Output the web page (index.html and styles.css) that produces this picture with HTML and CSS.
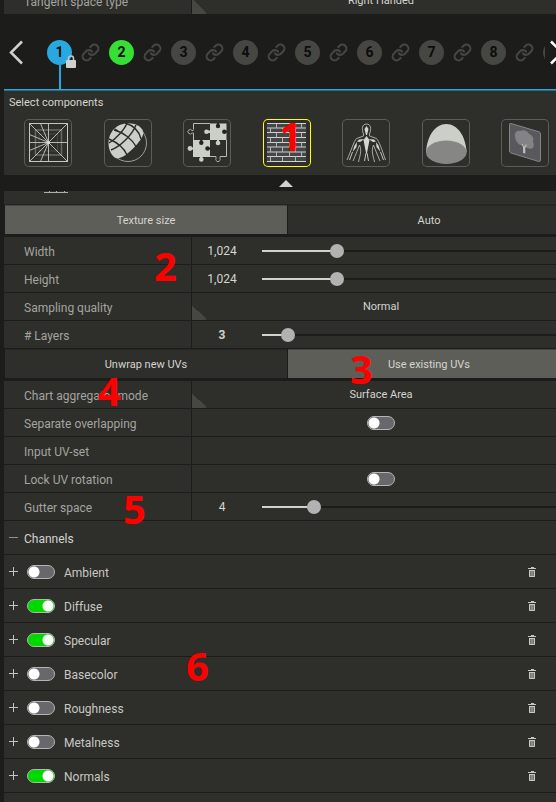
FILE: index.html
```html
<!DOCTYPE html>
<html lang="en">
<head>
<meta charset="utf-8">
<title>Components</title>
<link rel="stylesheet" href="styles.css">
</head>
<body>
<svg class="defs" aria-hidden="true">
  <symbol id="link" viewBox="0 0 24 24"><path d="M10 13a5 5 0 0 0 7.54.54l3-3a5 5 0 0 0-7.07-7.07l-1.72 1.71M14 11a5 5 0 0 0-7.54-.54l-3 3a5 5 0 0 0 7.07 7.07l1.71-1.71" fill="none" stroke="currentColor" stroke-width="2.6" stroke-linecap="round"/></symbol>
  <symbol id="plus" viewBox="0 0 9 9"><path d="M0 4.5H9M4.5 0V9" stroke="currentColor"/></symbol>
  <symbol id="trash" viewBox="0 0 8 10"><path d="M3 0h3v1h2v1H0V1h3z" fill="#c8c8c4"/><path d="M1 3h6v7H1z" fill="#75756f"/><path d="M1.5 3v6.500h5V3M1 3.500h6" fill="none" stroke="#c8c8c4"/><path d="M4 4v5" stroke="#a0a09a"/></symbol>
</svg>
<main class="app">
  <div class="clip-top">
    <div class="row wide">
      <label for="tangent">Tangent space type</label>
      <div class="cell drop"><select id="tangent"><option>Right Handed</option></select></div>
    </div>
  </div>

  <nav class="steps">
    <button class="chev" aria-label="Previous"><svg width="16" height="25" viewBox="0 0 16 25"><path d="M14 1.500L3 12.500L14 23.500" fill="none" stroke="currentColor" stroke-width="2.500"/></svg></button>
    <div class="track">
      <button class="step blue">1<svg class="lock" width="10" height="13" viewBox="0 0 10 13"><path d="M2.500 6V3.500a2.500 2.500 0 0 1 5 0V6" fill="none" stroke="#c8c8c4" stroke-width="1.500"/><rect y="5" width="10" height="8" rx="1" fill="#d0d0cc"/></svg></button>
      <svg class="link"><use href="#link"/></svg>
      <button class="step green">2</button><svg class="link"><use href="#link"/></svg>
      <button class="step">3</button><svg class="link"><use href="#link"/></svg>
      <button class="step">4</button><svg class="link"><use href="#link"/></svg>
      <button class="step">5</button><svg class="link"><use href="#link"/></svg>
      <button class="step">6</button><svg class="link"><use href="#link"/></svg>
      <button class="step">7</button><svg class="link"><use href="#link"/></svg>
      <button class="step">8</button><svg class="link"><use href="#link"/></svg>
      <button class="step" aria-label="Step nine"></button>
    </div>
    <button class="chev next" aria-label="Next"><svg width="16" height="25" viewBox="0 0 16 25"><path d="M1 1.500L12 12.500L1 23.500" fill="none" stroke="currentColor" stroke-width="2.500"/></svg></button>
  </nav>

  <section class="components">
    <h2>Select components</h2>
    <div class="cards">
      <button class="card" aria-label="Remesh"><svg viewBox="0 0 48 48" fill="none" stroke="#c4c6c0"><rect x="11.500" y="11" width="26" height="25" stroke="#686864" stroke-width="1.500"/><rect x="15" y="15" width="18.500" height="17" stroke="#484844"/><rect x="5.500" y="4.500" width="38" height="38"/><path d="M24.500 4.500v38M5.500 23.500h38" stroke-width=".9"/><path d="M5.500 4.500l38 38M43.500 4.500l-38 38M16.500 4.500l8 19-8 19M5.500 15.500l19 8-19 8" stroke-width=".9"/><circle cx="24.500" cy="23.500" r="1.500" fill="#ddd" stroke="none"/></svg></button>
      <button class="card" aria-label="Retopology"><svg viewBox="0 0 48 48"><circle cx="24" cy="24" r="18.500" fill="none" stroke="#b8bab4" stroke-width=".8"/><path d="M39 12C37 7 31 4.300 24 4.300C13 4.300 4.500 13 4.500 24C4.500 31 7.500 37 12 39.200C17 40.500 25 34 31 27.500C36 22 40.500 16 39 12Z" fill="#cccec8"/><path d="M10 11C19 13 28 20 32 27.500M5 20C12 23 20 29 23 36M21 4C28 6 35 11 37 20M23 4C21 10 12 20 5 24M32 6C28 16 17 27 7 31M11 10L17 14" fill="none" stroke="#2b2b28" stroke-width="1.400"/></svg></button>
      <button class="card" aria-label="UV unwrap"><svg viewBox="0 0 48 48"><path d="M27 4.500H43.500V21H27ZM10 21H27V38H10Z" fill="#cccec8"/><path d="M27 4.500H10.500V10.500M10.500 15V21M43.500 21V37.500H37M33 37.500H27" fill="none" stroke="#b8bab4"/><path d="M10.500 11.500H9A2.200 2.200 0 1 0 9 14H10.500V15M37 37.500V39.500A2.200 2.200 0 1 1 33 39.500V37.500" fill="none" stroke="#aaaca6"/><g fill="#cccec8"><path d="M27 11.500V14H24.500V11.500ZM34 21H36V24H34ZM7 28.500H11V30.500H7ZM17.200 37H19.400V40H17.200Z"/><circle cx="23.500" cy="12.700" r="2.300"/><circle cx="35" cy="24" r="2.300"/><circle cx="7" cy="29.500" r="2.400"/><circle cx="18.300" cy="40.500" r="2.300"/></g><g fill="#24241f"><path d="M34 4H36V7H34ZM41 11.700H44V13.700H41ZM17.300 20.500H19.300V23H17.300ZM24 28.500H27.500V30.500H24Z"/><circle cx="35" cy="7" r="2.200"/><circle cx="41.300" cy="12.700" r="2.200"/><circle cx="18.300" cy="23.700" r="2.200"/><circle cx="24.500" cy="29.500" r="2.200"/></g></svg></button>
      <button class="card selected" aria-label="Material bake"><svg viewBox="0 0 48 48"><path d="M4 4H43V42.500H4Z" fill="#45454a"/><path d="M4 4.500H43M4 9H43M4 13.500H43M4 18.500H43M4 23.500H43M4 28H43M4 33H43M4 37.500H43M4 42.500H43" stroke="#d0d2cc" stroke-width="1.200"/><path d="M13.500 5V9M26.500 5V9M38.500 5V9M7.500 9V13.500M19.500 9V13.500M32.500 9V13.500M13.500 13.500V18.500M26.500 13.500V18.500M38.500 13.500V18.500M7.500 18.500V23.500M19.500 18.500V23.500M32.500 18.500V23.500M13.500 23.500V28M26.500 23.500V28M38.500 23.500V28M7.500 28V33M19.500 28V33M32.500 28V33M13.500 33V37.500M26.500 33V37.500M38.500 33V37.500M7.500 37.500V42M19.500 37.500V42M32.500 37.500V42" stroke="#b4b6b0"/></svg></button>
      <button class="card" aria-label="Rigging"><svg viewBox="0 0 48 48"><path d="M21.500 15C19.500 10 20 5 24.500 5S29.500 10 27.500 15V17L34.500 19.500C37 22 40 31 43.500 41M21.500 15V17L14.500 19.500C12 22 9 32 5 41M11 42C14 35 16 30 17.500 26C20 32 18 36 16.500 43M38 42C35 35 33 30 31.500 26C29 32 31 36 32.500 43" fill="none" stroke="#b6b8b2" stroke-width=".9"/><path d="M24.500 7L26.500 10L25 16H24L22.500 10ZM24.500 17L27.500 21L25 34H24L21.500 21ZM22.500 20L18 23L15 22.500L17 20.500ZM26.500 20L31 23L34 22.500L32 20.500ZM15 23L14.500 28L10.500 33L12.500 26.500ZM34 23L34.500 28L38.500 33L36.500 26.500Z" fill="#d4d6d0"/><path d="M10.500 33L7.500 41M38.500 33L41.500 41M24 34L22.500 42M25 34L26.500 42" stroke="#d4d6d0" stroke-width=".9"/></svg></button>
      <button class="card" aria-label="Impostor dome"><svg viewBox="0 0 48 48"><path d="M4 33C5 17 13 5 24.300 5S43.500 17 44.600 33Z" fill="#cccec8"/><ellipse cx="24.300" cy="33.200" rx="20.300" ry="11.700" fill="#868684"/></svg></button>
      <button class="card" aria-label="Billboard"><svg viewBox="0 0 48 48"><path d="M10 4.500L38 12.800Q39.500 13.300 39.500 15V41Q39.500 43 37.500 42.400L10 34Q8.500 33.500 8.500 32V6Q8.500 4 10 4.500Z" fill="#59595d" stroke="#858588"/><path d="M14 18C13 14 16 11 19 12C22 10 27 12 28 15C32 16 33 20 32 23C34 27 32 31 28 29.500C25 29 24 27 22 26C18 27 15 23 14 18Z" fill="#838385"/><path d="M22 34V28L20.500 25H21.700L23 27.500L25 25.500H26L24.300 29V34.500Z" fill="#bcbcbc"/></svg></button>
    </div>
  </section>

  <button class="collapse" aria-label="Collapse"><svg width="14" height="7" viewBox="0 0 14 7"><path d="M7 0L14 7H0Z" fill="#d0d2cc"/></svg></button>

  <section class="settings wide">
    <div class="remnant"><svg width="24" height="2" viewBox="0 0 24 2"><path d="M0 1.500H24M5.500 0V1M12.500 0V1M20.500 0V1" stroke="#aeb0aa"/></svg></div>
    <div class="tabs"><button class="on">Texture size</button><button>Auto</button></div>
    <div class="row"><label for="w">Width</label><div class="cell"><input class="num" id="w" value="1,024"><input type="range" aria-label="Width slider" max="1000" value="231" style="--f:23.500%"></div></div>
    <div class="row"><label for="h">Height</label><div class="cell"><input class="num" id="h" value="1,024"><input type="range" aria-label="Height slider" max="1000" value="231" style="--f:23.500%"></div></div>
    <div class="row"><label for="q">Sampling quality</label><div class="cell drop"><select id="q"><option>Normal</option></select></div></div>
    <div class="row"><label for="l"># Layers</label><div class="cell"><input class="num strong" id="l" value="3"><input type="range" aria-label="Layers slider" max="1000" value="65" style="--f:8%"></div></div>
    <div class="tabs"><button>Unwrap new UVs</button><button class="on">Use existing UVs</button></div>
    <div class="row"><label for="c">Chart aggregator mode</label><div class="cell drop"><select id="c"><option>Surface Area</option></select></div></div>
    <div class="row"><label for="s">Separate overlapping</label><div class="cell mid"><input class="toggle" type="checkbox" id="s"></div></div>
    <div class="row"><label for="i">Input UV-set</label><div class="cell"><input class="text" id="i"></div></div>
    <div class="row"><label for="r">Lock UV rotation</label><div class="cell mid"><input class="toggle" type="checkbox" id="r"></div></div>
    <div class="row"><label for="g">Gutter space</label><div class="cell"><input class="num" id="g" value="4"><input type="range" aria-label="Gutter slider" max="1000" value="153" style="--f:16%"></div></div>
  </section>

  <section class="channels">
    <div class="channel"><button class="exp dim" aria-label="Collapse channels"><svg width="9" height="9" viewBox="0 0 9 9"><path d="M0 4.500H9" stroke="currentColor"/></svg></button><h3>Channels</h3></div>
    <div class="channel"><button class="exp" aria-label="Expand"><svg width="9" height="9"><use href="#plus"/></svg></button><input class="toggle" type="checkbox" id="c1"><label for="c1">Ambient</label><button class="del" aria-label="Delete"><svg width="8" height="10"><use href="#trash"/></svg></button></div>
    <div class="channel"><button class="exp" aria-label="Expand"><svg width="9" height="9"><use href="#plus"/></svg></button><input class="toggle" type="checkbox" id="c2" checked><label for="c2">Diffuse</label><button class="del" aria-label="Delete"><svg width="8" height="10"><use href="#trash"/></svg></button></div>
    <div class="channel"><button class="exp" aria-label="Expand"><svg width="9" height="9"><use href="#plus"/></svg></button><input class="toggle" type="checkbox" id="c3" checked><label for="c3">Specular</label><button class="del" aria-label="Delete"><svg width="8" height="10"><use href="#trash"/></svg></button></div>
    <div class="channel"><button class="exp" aria-label="Expand"><svg width="9" height="9"><use href="#plus"/></svg></button><input class="toggle" type="checkbox" id="c4"><label for="c4">Basecolor</label><button class="del" aria-label="Delete"><svg width="8" height="10"><use href="#trash"/></svg></button></div>
    <div class="channel"><button class="exp" aria-label="Expand"><svg width="9" height="9"><use href="#plus"/></svg></button><input class="toggle" type="checkbox" id="c5"><label for="c5">Roughness</label><button class="del" aria-label="Delete"><svg width="8" height="10"><use href="#trash"/></svg></button></div>
    <div class="channel"><button class="exp" aria-label="Expand"><svg width="9" height="9"><use href="#plus"/></svg></button><input class="toggle" type="checkbox" id="c6"><label for="c6">Metalness</label><button class="del" aria-label="Delete"><svg width="8" height="10"><use href="#trash"/></svg></button></div>
    <div class="channel"><button class="exp" aria-label="Expand"><svg width="9" height="9"><use href="#plus"/></svg></button><input class="toggle" type="checkbox" id="c7" checked><label for="c7">Normals</label><button class="del" aria-label="Delete"><svg width="8" height="10"><use href="#trash"/></svg></button></div>
  </section>

  <span class="mark m1">1</span><span class="mark m2">2</span><span class="mark m3">3</span>
  <span class="mark m4">4</span><span class="mark m5">5</span><span class="mark m6">6</span>
</main>
</body>
</html>
```
FILE: styles.css
```css
* { box-sizing: border-box; }
html { height: 100%; }
body {
  margin: 0;
  height: 100%;
  background: #1c1c1a;
  color: #c8c8c4;
  font: 12px/16px Roboto, sans-serif;
  overflow: hidden;
}
button, input, select { font: inherit; color: inherit; background: none; border: 0; margin: 0; padding: 0; }
button { display: flex; align-items: center; justify-content: center; }
svg { display: block; }
.defs { position: absolute; width: 0; height: 0; }
.app {
  position: relative;
  display: flex;
  flex-direction: column;
  min-height: 100%;
  padding-left: 4px;
  overflow: hidden;
}
.wide { margin-right: -14px; }

.clip-top { display: flex; flex-direction: column; justify-content: flex-end; height: 15px; overflow: hidden; }
.clip-top .row { flex: none; }

.row { display: grid; grid-template-columns: 188px 1fr; height: 28px; background: #2e2e2a; border-bottom: 1px solid #1c1c1a; }
.row > label { padding: 7px 0 0 20px; line-height: 16px; color: #a4a4a0; border-right: 1px solid #1c1c1a; }
.cell { display: flex; align-items: center; min-width: 0; }
.mid { justify-content: center; }
.drop { background: linear-gradient(45deg, #464643 50%, transparent 50%) left bottom / 15px 15px no-repeat; }
select { appearance: none; width: 100%; height: 27px; padding-top: 1px; font-size: 11px; text-align: center; text-align-last: center; color: #d4d4d0; }
.num { flex: none; width: 60px; margin-right: 10px; padding-top: 1px; text-align: center; color: #d4d4d0; }
.strong { font-weight: 700; }
.text { width: 100%; }

input[type="range"] {
  appearance: none;
  flex: 1;
  min-width: 0;
  height: 14px;
  background: linear-gradient(#d0d2cc, #d0d2cc) 0 50% / var(--f) 2px no-repeat, linear-gradient(#1c1c1a, #1c1c1a) 0 50% / 100% 2px no-repeat;
}
input[type="range"]::-webkit-slider-thumb { appearance: none; width: 14px; height: 14px; border-radius: 50%; background: #b2b2b2; }

.toggle {
  appearance: none;
  flex: none;
  width: 28px;
  height: 14px;
  border: 1px solid #b4b4b4;
  border-radius: 7px;
  background: radial-gradient(circle at 6px 6px, #fff 5px, transparent 6px) #68686c;
}
.toggle:checked { background: radial-gradient(circle at 20px 6px, #fff 5px, transparent 6px) #00d900; }

.steps { display: flex; align-items: center; height: 74px; }
.chev { flex: none; width: 24px; height: 25px; color: #d0d0cc; }
.next { width: 11px; justify-content: flex-start; padding-left: 5px; color: #fff; overflow: hidden; }
.next svg { flex: none; }
.track { display: flex; flex: 1; align-items: center; gap: 9px; min-width: 0; height: 74px; padding-left: 19px; overflow: hidden; }
.step { position: relative; flex: none; width: 25px; height: 25px; border-radius: 50%; background: #464642; color: #0c0c0c; font-size: 14px; font-weight: 700; }
.blue { background: #29a8e0; }
.green { background: #36df36; }
.blue::after { content: ""; position: absolute; top: 25px; left: 12px; width: 2px; height: 24px; background: #29a8e0; }
.lock { position: absolute; left: 19px; top: 15px; z-index: 1; }
.link { flex: none; width: 19px; height: 19px; color: #464642; }

.components { border-top: 1px solid #29a8e0; background: #2e2e2a; box-shadow: inset 0 1px #256f8c; padding: 5px 7px 8px 5px; }
h2, h3 { margin: 0; font-weight: 400; color: #d4d4d0; }
h2 { font-size: 11px; line-height: 16px; }
h3 { font-size: 12px; }
.cards { display: flex; justify-content: space-between; margin: 8px 0 0 15px; }
.card { flex: none; width: 48px; height: 48px; border-radius: 5px; box-shadow: inset 0 0 0 1px #5c5c58; }
.card svg { width: 48px; height: 48px; }
.selected { box-shadow: inset 0 0 0 1px #ff0; }
.collapse { height: 16px; width: 565px; max-width: 100%; padding-left: 12px; }

.remnant { height: 14px; padding-left: 40px; background: #2e2e2a; border-bottom: 1px solid #242422; }
.tabs { display: grid; grid-template-columns: 282px 1fr; gap: 1px; height: 32px; padding: 0 0 3px 1px; }
.tabs button { padding-top: 2px; background: #2e2e2a; border-top: 1px solid #262624; font-size: 11px; color: #d4d4d0; }
.tabs .on { background: #5e5e58; border-top-color: #454541; }

.channels { flex: 1; background: #2e2e2a; }
.channel { display: flex; align-items: center; height: 34px; padding: 0 20px 0 5px; border-bottom: 1px solid #1c1c1a; }
.channel label { margin-left: 9px; padding-top: 2px; }
.channel h3 { padding-top: 2px; }
.exp { width: 9px; height: 14px; margin-right: 9px; color: #c4c4c0; }
.exp + h3 { margin-left: -3px; }
.exp.dim { color: #90908b; }
.del { margin-left: auto; }

.mark { position: absolute; font: 700 40px/40px "Open Sans", sans-serif; color: #f00; pointer-events: none; }
.m1 { left: 279px; top: 116px; }
.m2 { left: 154px; top: 246px; }
.m3 { left: 350px; top: 349px; }
.m4 { left: 98px; top: 371px; }
.m5 { left: 123px; top: 489px; }
.m6 { left: 186px; top: 646px; }
```
